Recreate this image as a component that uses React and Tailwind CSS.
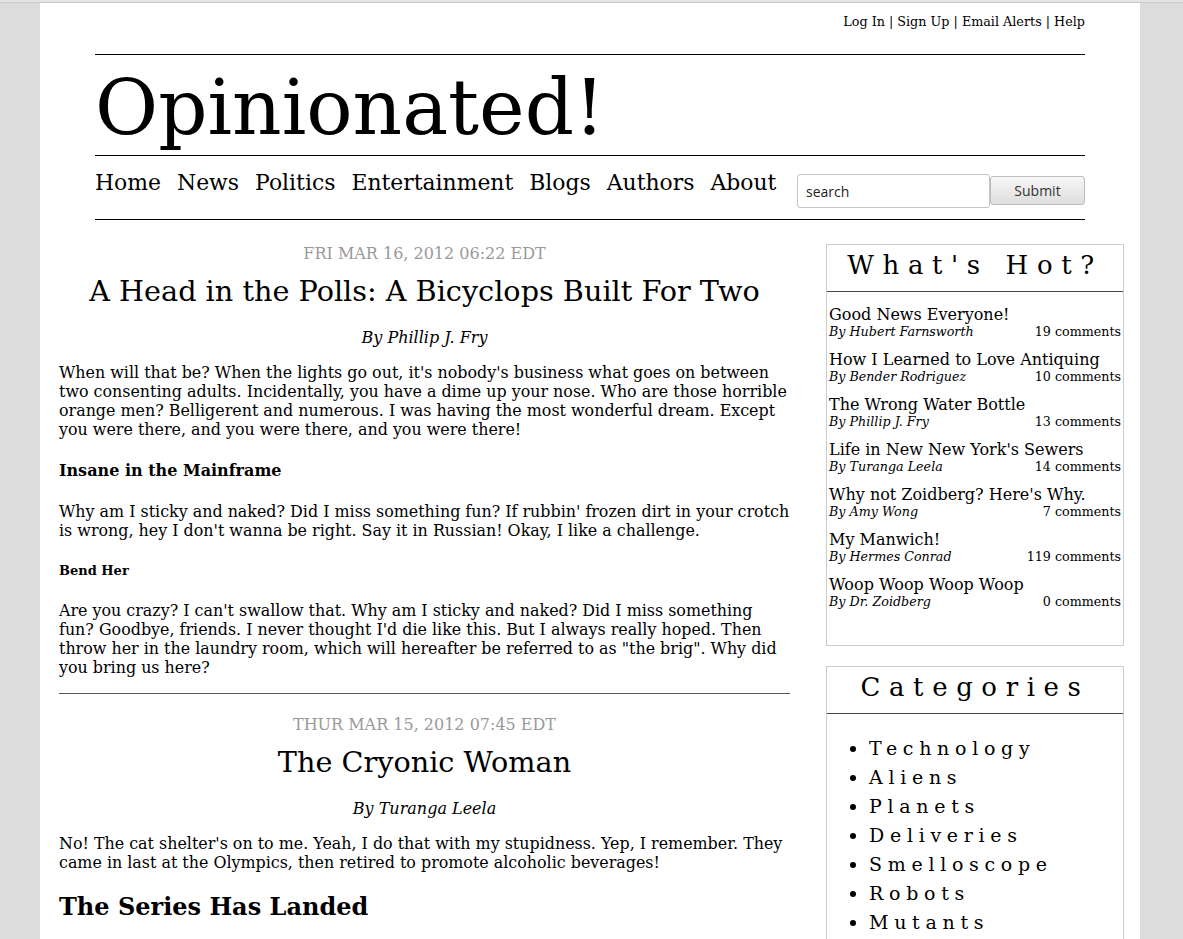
import React from 'react';

const serif = { fontFamily: '"DejaVu Serif", serif' };

const navLinks = ['Home', 'News', 'Politics', 'Entertainment', 'Blogs', 'Authors', 'About'];

const hotPosts = [
    { title: 'Good News Everyone!', author: 'Hubert Farnsworth', comments: 19 },
    { title: 'How I Learned to Love Antiquing', author: 'Bender Rodriguez', comments: 10 },
    { title: 'The Wrong Water Bottle', author: 'Phillip J. Fry', comments: 13 },
    { title: "Life in New New York's Sewers", author: 'Turanga Leela', comments: 14 },
    { title: "Why not Zoidberg? Here's Why.", author: 'Amy Wong', comments: 7 },
    { title: 'My Manwich!', author: 'Hermes Conrad', comments: 119 },
    { title: 'Woop Woop Woop Woop', author: 'Dr. Zoidberg', comments: 0 },
];

const categories = ['Technology', 'Aliens', 'Planets', 'Deliveries', 'Smelloscope', 'Robots', 'Mutants'];

const Header = () => {
    return (
        <header className='px-[55px]'>
            <div className='flex justify-end pt-[9px] h-[51px] text-[12.75px]'>
                <a href='#'>Log In</a>&nbsp;|&nbsp;<a href='#'>Sign Up</a>&nbsp;|&nbsp;<a href='#'>Email Alerts</a>&nbsp;|&nbsp;<a href='#'>Help</a>
            </div>
            <div className='border-t border-black h-[101px] flex items-center'>
                <h1 className='text-[77px] leading-none mt-[5px]'>Opinionated!</h1>
            </div>
            <nav className='border-t border-b border-black h-[65px] flex items-start justify-between'>
                <ul className='flex gap-[16px] text-[21.9px] pt-[11px]'>
                    {navLinks.map((link) => (
                        <li key={link}><a href='#'>{link}</a></li>
                    ))}
                </ul>
                <form className='flex items-start pt-[18px]' onSubmit={(e) => e.preventDefault()}>
                    <input
                        type='text'
                        defaultValue='search'
                        className='w-[193px] h-[34px] border border-[#c4c4c4] rounded-[3px] px-[8px] text-[14px] text-[#222]'
                        style={{ fontFamily: '"Open Sans", sans-serif' }}
                    />
                    <button
                        type='submit'
                        className='mt-[2px] w-[95px] h-[29px] border border-[#bdbdbd] rounded-[3px] bg-gradient-to-b from-[#f7f7f7] to-[#dedede] text-[14px] text-[#333]'
                        style={{ fontFamily: '"Open Sans", sans-serif' }}
                    >
                        Submit
                    </button>
                </form>
            </nav>
        </header>
    );
}

const Article = ({ date, title, author, children }) => {
    return (
        <article>
            <div className='text-center text-[#999] text-[16px] leading-[19px]'>{date}</div>
            <h2 className='text-center text-[28.7px] leading-[33px] mt-[12px]'>{title}</h2>
            <div className='text-center italic text-[16px] leading-[20px] mt-[20px]'>{author}</div>
            {children}
        </article>
    );
}

const Sidebar = () => {
    return (
        <aside className='w-[298px] shrink-0 flex flex-col gap-[20px]'>
            <section className='border border-[#cccccc] h-[402px]'>
                <h3 className='text-center text-[26px] tracking-[8.6px] leading-[30px] pt-[5px] pb-[11px] border-b border-[#444]'>What's Hot?</h3>
                <ul className='px-[2px] pt-[13px] flex flex-col gap-[11px]'>
                    {hotPosts.map((post) => (
                        <li key={post.title}>
                            <div className='text-[16px] leading-[19px]'>{post.title}</div>
                            <div className='flex justify-between text-[12.7px] leading-[15px]'>
                                <span className='italic'>By {post.author}</span>
                                <span>{post.comments} comments</span>
                            </div>
                        </li>
                    ))}
                </ul>
            </section>
            <section className='border border-[#cccccc] h-[300px]'>
                <h3 className='text-center text-[26px] tracking-[8.6px] leading-[30px] pt-[5px] pb-[11px] border-b border-[#444]'>Categories</h3>
                <ul className='list-disc pl-[42px] pt-[20px] text-[19px] leading-[29px] tracking-[0.3em]'>
                    {categories.map((cat) => (
                        <li key={cat}><a href='#'>{cat}</a></li>
                    ))}
                </ul>
            </section>
        </aside>
    );
}

export default function App() {
    return (
        <div className='min-h-screen bg-[#dcdcdd] text-black' style={serif}>
            <div className='h-[3px] bg-[#e4e4e2] border-b border-[#c9c9c7]'></div>
            <div className='ml-10 w-[1100px] bg-white min-h-[940px] pb-10'>
                <Header />
                <main className='flex justify-between pl-[19px] pr-[16px] pt-[24px]'>
                    <div className='w-[731px]'>
                        <Article date='FRI MAR 16, 2012 06:22 EDT' title='A Head in the Polls: A Bicyclops Built For Two' author='By Phillip J. Fry'>
                            <div className='text-[15.9px] leading-[19px]'>
                                <p className='mt-[15px]'>When will that be? When the lights go out, it's nobody's business what goes on between two consenting adults. Incidentally, you have a dime up your nose. Who are those horrible orange men? Belligerent and numerous. I was having the most wonderful dream. Except you were there, and you were there, and you were there!</p>
                                <h4 className='font-bold text-[16px] mt-[22px]'>Insane in the Mainframe</h4>
                                <p className='mt-[22px]'>Why am I sticky and naked? Did I miss something fun? If rubbin' frozen dirt in your crotch is wrong, hey I don't wanna be right. Say it in Russian! Okay, I like a challenge.</p>
                                <h6 className='font-bold text-[13px] leading-[16px] mt-[23px]'>Bend Her</h6>
                                <p className='mt-[22px]'>Are you crazy? I can't swallow that. Why am I sticky and naked? Did I miss something fun? Goodbye, friends. I never thought I'd die like this. But I always really hoped. Then throw her in the laundry room, which will hereafter be referred to as "the brig". Why did you bring us here?</p>
                            </div>
                        </Article>
                        <hr className='mt-[16px] mb-[21px] border-t border-[#555]' />
                        <Article date='THUR MAR 15, 2012 07:45 EDT' title='The Cryonic Woman' author='By Turanga Leela'>
                            <div className='text-[15.9px] leading-[19px]'>
                                <p className='mt-[15px]'>No! The cat shelter's on to me. Yeah, I do that with my stupidness. Yep, I remember. They came in last at the Olympics, then retired to promote alcoholic beverages!</p>
                                <h2 className='font-bold text-[24px] leading-[28px] mt-[21px]'>The Series Has Landed</h2>
                            </div>
                        </Article>
                    </div>
                    <Sidebar />
                </main>
            </div>
        </div>
    );
}
